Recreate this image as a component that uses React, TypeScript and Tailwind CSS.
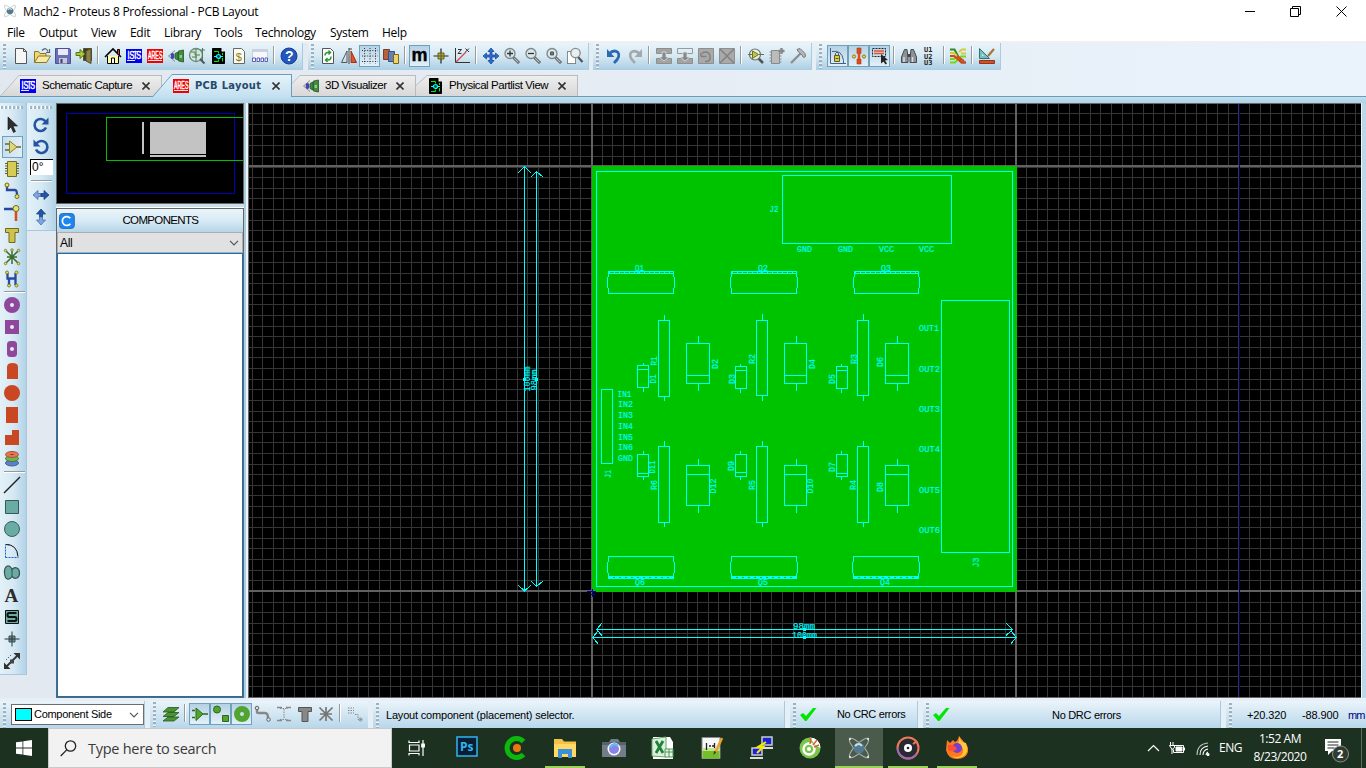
import React from "react";

type Kids = { children?: React.ReactNode };

/* ---------- icon helpers ---------- */
const Ic = ({ children, s = 18 }: Kids & { s?: number }) => (
  <svg width={s} height={s} viewBox="0 0 18 18" fill="none" className="shrink-0">{children}</svg>
);
const Logo = ({ text, color }: { text: string; color: string }) => (
  <svg width="16" height="14" viewBox="0 0 16 14" className="shrink-0">
    <rect width="16" height="14" fill={color} />
    <g transform={text === "ISIS" ? "translate(1.5 0) scale(.72 1)" : "translate(1 0) scale(.53 1)"}>
      <text x="0" y="10.500" fontSize="10" fill="#fff" stroke="#fff" strokeWidth=".5" fontFamily="Liberation Sans, sans-serif">{text}</text>
    </g>
    <path d={text === "ISIS" ? "M1 11.500h8M7 2.500h8" : "M1 11.500h14"} stroke="#fff" strokeWidth="1" opacity=".9" />
  </svg>
);
const Partlist = () => (
  <Ic><path d="M3.500 1.500h9l3 3v12h-12z" fill="#000" stroke="#000" /><path d="M12.500 1v3.500H16z" fill="#fff" /><path d="M5 4.500h4.500v2M5 14.500h4.500v-2M13.500 6v2M13.500 11v3.500" stroke="#0e0" /><path d="M5 9.500h9" stroke="#0ff" /><circle cx="9.500" cy="9.500" r="2" fill="#044" stroke="#0ff" strokeWidth="1.200" /></Ic>
);
const Viewer = () => (
  <Ic><path d="M8 3.500 1.500 9 8 14.500" stroke="#888" /><ellipse cx="5.500" cy="9" rx="1.800" ry="3" fill="#4342b8" /><path d="M8 6.500 11 5v8l-3-1.500zM11.500 4l5-1v12l-5-1z" fill="#3f8f3c" stroke="#24532a" strokeWidth=".8" /><path d="M12.500 8h2.500v3h-2.500z" fill="#8acb86" /></Ic>
);
const Mag = ({ children }: Kids) => (
  <Ic><path d="m10.500 10.500 5.500 5.500" stroke="#4a4a4a" strokeWidth="2.800" /><path d="m11 11 4.500 4.500" stroke="#bbb" strokeWidth="1.200" /><circle cx="7" cy="6.500" r="5" fill="#d8e8ea" stroke="#7c878a" strokeWidth="1.300" />{children}</Ic>
);
const Gray = ({ d }: { d: string }) => (
  <Ic><path d="M1.500 1.500h15v15h-15z" fill="#a9a9a9" stroke="#8f8f8f" /><path d={d} stroke="#7f8284" strokeWidth="1.500" /></Ic>
);

const fileIcons = {
  blank: <Ic><path d="M3.500 1.500h8l3 3v12h-11z" fill="#f6f6f6" stroke="#555" /><path d="M11.500 1.500v3h3" stroke="#555" /></Ic>,
  open: <Ic><path d="M1.500 15V4.500h4l1.500 2h6V9" fill="#ecd877" stroke="#8e7426" /><path d="m1.500 15.500 4-6.500h12l-4 6.500z" fill="#f8eaa0" stroke="#8e7426" /><path d="M9 3.500q4-4 6 1M16.500 2v3.500H13" stroke="#56606e" strokeWidth="1.200" /></Ic>,
  save: <Ic><path d="M1.500 1.500h14l1 1v14h-15z" fill="#6b6fb8" stroke="#4c5096" /><path d="M4 2h10v6H4z" fill="#e9eaf7" /><path d="M5 11h8v5.500H5z" fill="#c8c9d4" /><path d="M6.500 12h2v4h-2z" fill="#3a3d77" /></Ic>,
  exit: <Ic><path d="M8.500 1.500h8v12h-8z" fill="#3c3c2d" stroke="#57532c" /><path d="m11 4 5-2.500v15L11 14z" fill="#8d8247" stroke="#514b25" /><path d="M1 5.500h4V2.500L10 7l-5 4.500V8.500H1z" fill="#a9cb31" stroke="#587414" /></Ic>,
  home: <Ic><path d="M3.500 9v7.500h11V9" fill="#ffffa0" stroke="#000" /><path d="m1 10 8-8 8 8" stroke="#000" strokeWidth="1.600" /><path d="M13.500 6V2.500h2V8" fill="#e33" stroke="#000" /><path d="M7.500 16v-5h3v5" fill="#fff" stroke="#000" /></Ic>,
  gerber: <Ic><circle cx="8" cy="8" r="6.500" fill="#d5e6de" stroke="#6b8a7b" strokeWidth="1.300" /><path d="M3 5h4v3h5M8 2v12M4 10h5M14.500 1v14M12 3h5" stroke="#4b7e58" /><path d="m12 12 4.500 4.500" stroke="#555" strokeWidth="2" /></Ic>,
  bom: <Ic><path d="M3.500 1.500h8l3 3v12h-11z" fill="#fbfbef" stroke="#666" /><text x="5.800" y="13.500" fontSize="11" fill="#8a7a12" fontFamily="Liberation Sans, sans-serif">$</text></Ic>,
  notes: <Ic><path d="M1.500 2.500h15v12h-15z" fill="#f5f7fa" stroke="#c8ced8" /><path d="M1.500 2.500h15v2.500h-15z" fill="#c9d2de" /><path d="M1.500 11h3v3.500h-3zM6 11h2.500v3.500H6zM10 11h2.500v3.500H10zM14 11h2.500v3.500H14z" stroke="#5f60b4" strokeWidth="1" /></Ic>,
  help: <Ic><circle cx="9" cy="9" r="8" fill="#2257bd" stroke="#173f8f" /><text x="5" y="14" fontSize="14" fontWeight="bold" fill="#fff" fontFamily="Liberation Sans, sans-serif">?</text></Ic>,
};
const viewIcons = {
  refresh: <Ic><path d="M3.500 1.500h8l3 3v12h-11z" fill="#f8fbf7" stroke="#555" /><path d="M6 8.500q0-3 3-3h2M9.500 3.500l2 2-2 2M12 9.500q0 3.500-3 3.500H7M8.500 11l-2 2 2 2" stroke="#2f9237" strokeWidth="1.400" /></Ic>,
  flip: <Ic><path d="M7 4v11.500H1.500z" stroke="#555" /><path d="M11 4v11.500h5.500z" fill="#dc5530" stroke="#9b3017" /><path d="M9 1v16M9 2h3" stroke="#444" /></Ic>,
  grid: <Ic><path d="M1 3.500h16M1 9h16M1 14.500h16M3.500 1v16M9 1v16M14.500 1v16" stroke="#333" strokeDasharray="1 1.600" /></Ic>,
  layers: <Ic><path d="M1.500 2.500h6v10h-6z" fill="#b95f3a" stroke="#71402a" /><path d="M6.500 4.500h6v10h-6z" fill="#667fb5" stroke="#394f83" /><path d="M11.500 7.500h5v9h-5z" fill="#ecd468" stroke="#77671f" /></Ic>,
  m: <svg width="19" height="20" viewBox="0 0 19 20"><text x="1.500" y="15" fontSize="18" stroke="#000" strokeWidth=".4" fontWeight="bold" fontFamily="Liberation Sans, sans-serif">m</text></svg>,
  origin: <Ic><path d="M9 1.500v15M1.500 9h15" stroke="#222" strokeWidth="1.200" /><path d="M6 6h6v6H6z" fill="#b5ad28" stroke="#66610d" /><path d="M9 6v6M6 9h6" stroke="#555" /></Ic>,
  polar: <Ic><path d="M2.500 1v14.500H17" stroke="#333" /><path d="M3 15 13 5" stroke="#d44" strokeWidth="1.200" /><path d="M5 2.500h3.500L5 6.500h3.500M12.500 1.500l3.500 3.500m0-3.500-3.500 3.500" stroke="#333" /></Ic>,
  pan: <Ic><path d="m9 1 3 3.500h-2V8h3.500V6L17 9l-3.500 3v-2H10v3.500h2L9 17l-3-3.500h2V10H4.500v2L1 9l3.500-3v2H8V4.500H6z" fill="#2d6fd0" stroke="#19479b" strokeWidth=".8" /></Ic>,
  zin: <Mag><path d="M7 3.500v6M4 6.500h6" stroke="#333" strokeWidth="1.300" /></Mag>,
  zout: <Mag><path d="M4 6.500h6" stroke="#333" strokeWidth="1.300" /></Mag>,
  zfit: <Mag><path d="M5.500 5h3v3h-3z" fill="#777" stroke="#555" /></Mag>,
  zarea: <Ic><path d="M1.500 4.500h8v12h-8z" fill="#fff" stroke="#222" strokeDasharray="1 1" /><path d="m12 10 4.500 5" stroke="#555" strokeWidth="2.200" /><circle cx="9.500" cy="6" r="4.700" fill="#e7eff0" stroke="#858d8d" strokeWidth="1.300" /></Ic>,
};
const editIcons = {
  undo: <Ic><path d="M4 7Q9 2 13 5.500q3 4-4 10.500" stroke="#2a6ab5" strokeWidth="2.800" /><path d="M2 2v8h7.500z" fill="#2a6ab5" /></Ic>,
  redo: <Ic><path d="M14 7Q9 2 5 5.500q-3 4 4 10.500" stroke="#a3a8ab" strokeWidth="2.600" /><path d="M16 2v8H8.500z" fill="#a3a8ab" /></Ic>,
  g1: <Ic><path d="M1.500 1.500h15v5h-15zM1.500 11.500h15v5h-15z" fill="#a3a3a3" stroke="#8f8f8f" /><path d="M7 5h4v5h3l-5 4-5-4h3z" fill="#888" stroke="#dce6eb" strokeWidth=".8" /></Ic>,
  g2: <Ic><path d="M1.500 1.500h15v5h-15z" stroke="#999" /><path d="M1.500 11.500h15v5h-15z" fill="#a3a3a3" stroke="#8f8f8f" /><path d="M7 5h4v5h3l-5 4-5-4h3z" fill="#888" stroke="#dce6eb" strokeWidth=".8" /></Ic>,
  g3: <Gray d="M4 9.500h5.500M4 6v3.500M5 6q7-3 8 3t-5 5.500" />,
  g4: <Gray d="m2 2 14 14M16 2 2 16" />,
  pick: <Ic><path d="m11 11 5 5" stroke="#555" strokeWidth="2.600" /><circle cx="8" cy="7.500" r="5.500" fill="#e6eeda" stroke="#6b7370" strokeWidth="1.200" /><path d="M1 7.500h4M12 7.500h5M5.500 4v7.500L11.500 7.500z" stroke="#66733c" fill="#c3c43b" /></Ic>,
  pack: <Ic><path d="M3.500 3.500h8v13h-8z" fill="#bbb" stroke="#8a8a8a" /><path d="M1.500 5h2m-2 3h2m-2 3h2m-2 3h2M11.500 9h2m-2 3h2m-2 3h2" stroke="#888" /><path d="M13.500 1v6M10.500 4h6" stroke="#888" strokeWidth="2.400" /></Ic>,
  hammer: <Ic><path d="M2 16 11.500 6.500" stroke="#8d9091" strokeWidth="2.400" /><path d="m8 2.500 3-1 5 5 .5 3-2 1-2-3-3-2.500z" fill="#b5b7b8" stroke="#777" /></Ic>,
};
const toolIcons = {
  lock: <Ic><path d="M1.500 1v15.500H17M3 4.500q10-2 11.500 9v3" stroke="#42608c" /><path d="M5.500 8.500h5v6h-5z" fill="#d8ce3c" stroke="#625c17" /><path d="M6.500 8V6.500q1.500-3 3 0V8M6.500 11.500h3" stroke="#555" /></Ic>,
  track: <Ic><path d="M7 1h4v5.500H7zM7 12h4v5H7z" fill="#df4d1a" stroke="#a83714" strokeWidth=".6" /><path d="M9 6v6" stroke="#df4d1a" strokeWidth="2.500" /><circle cx="4" cy="9.500" r="1.600" fill="#ead743" stroke="#887d1b" /><circle cx="14" cy="9.500" r="1.600" fill="#ead743" stroke="#887d1b" /></Ic>,
  sel: <Ic><path d="M1.500 1.500h13v8h-13z" stroke="#222" strokeDasharray="2 1" /><path d="M3 4h10M3 6.500h10" stroke="#df5430" strokeWidth="1.600" /><path d="m10 7 7 6-3 .4 2 3-1.500 1-2-3-2.500 2z" fill="#222" /></Ic>,
  find: <Ic><path d="M4.500 2.500h2.500l1 7.500v5.500H1.500V10zM11 2.500h2.500l3 7.500v5.500H10V10z" fill="#8c9298" stroke="#484c50" /><path d="M7.500 7h3v3h-3z" fill="#444" /><path d="M4 10v5M12.500 10v5" stroke="#ddd" strokeWidth="1.500" /></Ic>,
  auto: <svg width="14" height="20" viewBox="0 0 14 20" fontSize="7" fontFamily="DejaVu Sans Mono, monospace" fontWeight="bold" fill="#222"><text x="1" y="6">U1</text><text x="1" y="12.500">U2</text><text x="1" y="19">U3</text></svg>,
  router: <Ic><path d="M1 2.500h4.500l7 13H17" stroke="#328a22" strokeWidth="2" /><path d="M1 6h4l3 3M10 5l3-2.500h4M12 6.500h5" stroke="#d8ca38" strokeWidth="2" /><path d="M17 9.500h-5l-3 3M1 12h4l2-2M1 15.500h5l3-3" stroke="#74d818" strokeWidth="2" /><path d="M1 9h4l7.500 6.500H17M8 9l7 5" stroke="#d8421a" strokeWidth="2" /></Ic>,
  rules: <Ic><path d="M1.500 1.500v10h10z" fill="#79bfc0" stroke="#327476" /><path d="M4 7v2h2z" fill="#d7ebf1" /><path d="m10 9 6-7" stroke="#a97430" strokeWidth="2.200" /><path d="M1.500 13.500h15v3h-15z" fill="#d44e28" stroke="#923519" /></Ic>,
};
const pcbIcons = {
  arrow: <Ic><path d="M5 1v13l3-3 2.500 5.500 2-1L10 10h4.500z" fill="#2e2e2e" stroke="#111" strokeWidth=".6" /></Ic>,
  comp: <Ic><path d="M1 6h4M1 12h4M13 9h4" stroke="#67682b" strokeWidth="1.300" /><path d="M5.500 3v12L13 9z" fill="#ded77a" stroke="#8b8228" /></Ic>,
  chip: <Ic><path d="M2 3.500h14M2 6h14M2 8.500h14M2 11h14M2 13.500h14" stroke="#625d22" /><path d="M4.500 1.500h9v15h-9z" fill="#d6cb55" stroke="#706a22" /></Ic>,
  trk: <Ic><path d="M4 3v5h8q2 0 2 5" stroke="#2949a0" strokeWidth="2.300" /><circle cx="4" cy="3" r="2" fill="#eee15a" stroke="#736b24" /><circle cx="14" cy="14.500" r="2" fill="#eee15a" stroke="#736b24" /></Ic>,
  via: <Ic><path d="M1 5h12" stroke="#2746a1" strokeWidth="2.500" /><path d="M13 5v12" stroke="#d74b1a" strokeWidth="2.500" /><circle cx="13" cy="4.500" r="3" fill="#ebe06a" stroke="#726b25" /></Ic>,
  zone: <Ic><path d="M2.500 2.500h13v4H12v10H6v-10H2.500z" fill="#cfc34b" stroke="#716b22" /></Ic>,
  rats: <Ic><path d="M9 2v14M3 3l12 12M15 3 3 15M4 9h10" stroke="#3d6d2d" strokeWidth="1.500" /><g fill="#e4da3d" stroke="#625e22" strokeWidth=".6"><circle cx="2.500" cy="2.500" r="1.300" /><circle cx="15.500" cy="2.500" r="1.300" /><circle cx="2.500" cy="15.500" r="1.300" /><circle cx="15.500" cy="15.500" r="1.300" /><circle cx="9" cy="2" r="1.300" /></g></Ic>,
  match: <Ic><path d="M4.500 3v5.500h8V3M12.500 8v7M6 8v7" stroke="#2949a0" strokeWidth="2.300" /><g fill="#e4da3d" stroke="#625e22" strokeWidth=".7"><circle cx="4" cy="2.500" r="1.500" /><circle cx="13.500" cy="2.500" r="1.500" /><circle cx="6" cy="15.500" r="1.500" /><circle cx="13.500" cy="15.500" r="1.500" /></g></Ic>,
};
const PURPLE = "#8f479b";
const ORANGE = "#c94722";
const padIcons = [
  <Ic><circle cx="9" cy="9" r="8" fill={PURPLE} /><circle cx="9" cy="9" r="2" fill="#e5ebf5" /></Ic>,
  <Ic><path d="M2 2h14v14H2z" fill={PURPLE} /><circle cx="9" cy="9" r="2" fill="#e5ebf5" /></Ic>,
  <Ic><rect x="4" y="1" width="10" height="16" rx="3.500" fill={PURPLE} /><circle cx="9" cy="9" r="2" fill="#e5ebf5" /></Ic>,
  <Ic><path d="M4 17V5q0-4 5.500-4T15 5v12z" fill={ORANGE} /></Ic>,
  <Ic><circle cx="9" cy="9" r="8" fill={ORANGE} /></Ic>,
  <Ic><path d="M3 1h12v16H3z" fill={ORANGE} /></Ic>,
  <Ic><path d="M2 7h7V2h7v15H2z" fill={ORANGE} /></Ic>,
  <Ic><ellipse cx="9" cy="13" rx="6.500" ry="3" fill="#5a7fd2" stroke="#53627f" /><ellipse cx="9" cy="8.500" rx="6.500" ry="3" fill="#6eb845" stroke="#4b7537" /><ellipse cx="9" cy="4.500" rx="6.500" ry="3" fill="#f2704c" stroke="#8f5b48" /><path d="M7.500 4.500h3" stroke="#643" /></Ic>,
];
const TEAL = "#6aaca4";
const drawIcons = [
  <Ic><path d="M1 17 17 1" stroke="#222" strokeWidth="1.400" /></Ic>,
  <Ic><path d="M2.500 2.500h13v13h-13z" fill={TEAL} stroke="#33595c" /></Ic>,
  <Ic><circle cx="9" cy="9" r="7.500" fill={TEAL} stroke="#3d5d5d" /></Ic>,
  <Ic><path d="M2.500 15.500v-13h4M2.500 15.500h13" stroke="#1663cc" strokeDasharray="2 1" /><path d="M3 2.500q11 0 12 12" stroke="#111" /></Ic>,
  <Ic><path d="M9 5.500C6-1 1 2 1.500 9S6 17 9 12.500C12 16 16.500 14 16.500 9S12 2 9 5.500z" fill={TEAL} stroke="#355252" strokeWidth="1.200" /><path d="M9 6v6" stroke="#355252" /></Ic>,
  <svg width="18" height="22" viewBox="0 -2 18 22"><text x="1.500" y="15.500" fontSize="19" fontWeight="bold" fill="#2b2b2b" fontFamily="Liberation Serif, serif">A</text></svg>,
  <Ic><path d="M2.500 2.500h13v13h-13z" fill={TEAL} stroke="#111" /><path d="M13.500 5H6Q4.500 5 4.500 7t1.500 2h6q1.500 0 1.500 2T12 13H4.500" stroke="#111" strokeWidth="2" /></Ic>,
  <Ic><path d="M9 1.500v15M1.500 9h15" stroke="#333" /><path d="M6 6h6v6H6z" fill="#62928d" stroke="#355" /><path d="M9 6v6M6 9h6" stroke="#333" /></Ic>,
  <Ic><path d="M2 16 16 2" stroke="#333" strokeWidth="1.800" /><path d="M1 10.500v6.500h6.500zM10.500 1H17v6.500z" fill="#333" /><path d="M7 7.500h4v4H7z" fill="#444" /><path d="m3 8 6-6" stroke="#333" strokeDasharray="1 2" /></Ic>,
];
const GREEN = "#52a431";
const Gn = { fill: GREEN, stroke: "#2c681b" };
const filterIcons = [
  <Ic><path d="M1 5.500h3M1 12.500h3M12 9h5" stroke="#2c681b" strokeWidth="1.300" /><path d="M5 3v12.500L12 9z" {...Gn} /></Ic>,
  <Ic><circle cx="5" cy="4.500" r="3.500" {...Gn} /><path d="M10.500 10.500h6v6h-6z" {...Gn} /></Ic>,
  <Ic><circle cx="9" cy="9" r="5" stroke={GREEN} strokeWidth="6" /></Ic>,
];
const GY = "#85888b";
const filterOff = [
  <Ic><path d="M3 3v4q0 1 2 1h6q3 0 3 5" stroke={GY} strokeWidth="2.400" /><circle cx="3" cy="3" r="1.800" fill="#ddd" stroke="#666" /><circle cx="14.500" cy="14.500" r="1.800" fill="#ddd" stroke="#666" /></Ic>,
  <Ic><path d="M2 2.500h5M11 2.500h5M2 15.500h5M11 15.500h5" stroke="#888" strokeWidth="1.400" /><path d="M5 3.500h8M5 14.500h8M9 4v10" stroke="#888" strokeDasharray="1.500 1" /></Ic>,
  <Ic><path d="M2.500 2.500h13v4H12v10H6v-10H2.500z" fill="#888" stroke="#555" /></Ic>,
  <Ic><path d="M9 2v14M2.500 2.500l13 13M15.500 2.500l-13 13M3 9h12" stroke="#777" strokeWidth="1.700" /></Ic>,
];

/* ---------- toolbar parts ---------- */
const Cell = ({ children, on }: Kids & { on?: boolean }) =>
  on ? (
    <div className="flex h-[22px] w-[21px] shrink-0 items-center justify-center border border-[#6fa1bf] bg-gradient-to-b from-[#b5d2e5] to-[#e3f0f8]">{children}</div>
  ) : (
    <div className="flex h-[22px] w-[21px] shrink-0 items-center justify-center">{children}</div>
  );
const Sep = ({ wide }: { wide?: boolean }) => (
  <div className={wide ? "flex h-[20px] w-[8px] shrink-0 justify-center" : "flex h-[20px] w-[7px] shrink-0 justify-center"}>
    <div className="h-[18px] w-[2px] border-r border-white bg-[#9a9a9a]" />
  </div>
);
const Grip = () => (
  <div className="ml-[3px] h-[26px] w-[3px] shrink-0 bg-[repeating-linear-gradient(to_bottom,#eef5fa_0,#eef5fa_1px,#9fb0bd_1px,#9fb0bd_3px,transparent_3px,transparent_4px)]" />
);
const HGrip = () => (
  <div className="mt-[3px] h-[3px] w-[24px] shrink-0 bg-[repeating-linear-gradient(to_right,#fff_0,#fff_1px,#a3b5c1_1px,#a3b5c1_3px,transparent_3px,transparent_4px)]" />
);

const TopBars = () => (
  <div className="flex h-[31px] bg-gradient-to-r from-[#e1e8ef] to-[#eaf2fb]">
    <div className="flex h-[27px] w-[303px] shrink-0 items-center border-r border-[#a9cbe0] bg-gradient-to-b from-[#e9f4fa] via-[#d5e8f3] to-[#abcee3] pb-px">
      <Grip /><div className="w-[4px]" />
      <Cell>{fileIcons.blank}</Cell><Cell>{fileIcons.open}</Cell><Cell>{fileIcons.save}</Cell><Cell>{fileIcons.exit}</Cell>
      <Sep wide />
      <Cell>{fileIcons.home}</Cell><Cell><Logo text="ISIS" color="#0000f0" /></Cell><Cell><Logo text="ARES" color="#f00000" /></Cell><Cell><Viewer /></Cell><Cell>{fileIcons.gerber}</Cell><Cell><Partlist /></Cell><Cell>{fileIcons.bom}</Cell><Cell>{fileIcons.notes}</Cell>
      <Sep wide />
      <Cell>{fileIcons.help}</Cell>
    </div>
    <div className="ml-[5px] flex h-[27px] w-[281px] shrink-0 items-center border-r border-[#a9cbe0] bg-gradient-to-b from-[#e9f4fa] via-[#d5e8f3] to-[#abcee3] pb-px">
      <Grip /><div className="w-[3px]" />
      <Cell>{viewIcons.refresh}</Cell><Cell>{viewIcons.flip}</Cell><Cell on>{viewIcons.grid}</Cell><Cell>{viewIcons.layers}</Cell>
      <Sep wide />
      <Cell on>{viewIcons.m}</Cell><Cell>{viewIcons.origin}</Cell><Cell>{viewIcons.polar}</Cell>
      <Sep wide />
      <Cell>{viewIcons.pan}</Cell><Cell>{viewIcons.zin}</Cell><Cell>{viewIcons.zout}</Cell><Cell>{viewIcons.zfit}</Cell><Cell>{viewIcons.zarea}</Cell>
    </div>
    <div className="ml-[4px] flex h-[27px] w-[219px] shrink-0 items-center border-r border-[#a9cbe0] bg-gradient-to-b from-[#e9f4fa] via-[#d5e8f3] to-[#abcee3] pb-px">
      <Grip /><div className="w-[4px]" />
      <Cell>{editIcons.undo}</Cell><Cell>{editIcons.redo}</Cell>
      <Sep wide />
      <Cell>{editIcons.g1}</Cell><Cell>{editIcons.g2}</Cell><Cell>{editIcons.g3}</Cell><Cell>{editIcons.g4}</Cell>
      <Sep wide />
      <Cell>{editIcons.pick}</Cell><Cell>{editIcons.pack}</Cell><Cell>{editIcons.hammer}</Cell>
    </div>
    <div className="ml-[4px] flex h-[27px] w-[185px] shrink-0 items-center border-r border-[#a9cbe0] bg-gradient-to-b from-[#e9f4fa] via-[#d5e8f3] to-[#abcee3] pb-px">
      <Grip /><div className="w-[5px]" />
      <Cell on>{toolIcons.lock}</Cell><Cell on>{toolIcons.track}</Cell><Cell on>{toolIcons.sel}</Cell>
      <Sep wide />
      <Cell>{toolIcons.find}</Cell><Cell>{toolIcons.auto}</Cell>
      <Sep />
      <Cell>{toolIcons.router}</Cell>
      <Sep wide />
      <Cell>{toolIcons.rules}</Cell>
    </div>
  </div>
);

/* ---------- tabs ---------- */
const X = () => (
  <svg width="8" height="8" viewBox="0 0 8 8" className="shrink-0"><path d="m.5.5 7 7M7.500.5l-7 7" stroke="#333" strokeWidth="1.600" /></svg>
);
const Tabs = () => (
  <div className="flex h-[23px] items-end border-b border-[#6b9cbc] bg-gradient-to-r from-[#e1e8ef] to-[#eaf2fb] font-['Liberation_Sans',sans-serif] text-[11.5px] text-black">
    <div className="h-[21px] w-[162px] shrink-0 bg-[#b8bcc0] pt-px pr-px [clip-path:polygon(19px_0,100%_0,100%_100%,0_100%)]">
      <div className="flex h-[20px] items-center bg-gradient-to-b from-[#eeeeee] to-[#d8d8d8] pb-px pl-[20px] [clip-path:polygon(19px_0,100%_0,100%_100%,1px_100%)]">
        <Logo text="ISIS" color="#0000f0" /><span className="ml-[6px] w-[100px] whitespace-nowrap tracking-[-0.45px]">Schematic Capture</span><X />
      </div>
    </div>
    <div className="z-10 -mb-px ml-[-10px] h-[23px] w-[140px] shrink-0 bg-[#6b9cbc] pt-px pr-px [clip-path:polygon(20px_0,100%_0,100%_100%,0_100%)]">
      <div className="flex h-[22px] items-center bg-gradient-to-b from-[#e6f3fa] to-[#c3e0f0] pb-px pl-[21px] [clip-path:polygon(20px_0,100%_0,100%_100%,1px_100%)]">
        <Logo text="ARES" color="#f00000" /><span className="ml-[6px] w-[77px] whitespace-nowrap pt-px font-['DejaVu_Sans_Condensed','DejaVu_Sans',sans-serif] text-[11px] font-bold tracking-[0.3px] text-[#25496a]">PCB Layout</span><X />
      </div>
    </div>
    <div className="h-[21px] w-[124px] shrink-0 bg-[#b8bcc0] pt-px pr-px [clip-path:polygon(8px_0,100%_0,100%_100%,0_100%,0_8px)]">
      <div className="flex h-[20px] items-center bg-gradient-to-b from-[#eeeeee] to-[#d8d8d8] pb-px pl-[10px] [clip-path:polygon(8px_0,100%_0,100%_100%,0_100%,0_8px)]">
        <Viewer /><span className="ml-[5px] w-[71px] whitespace-nowrap tracking-[-0.45px]">3D Visualizer</span><X />
      </div>
    </div>
    <div className="h-[21px] w-[162px] shrink-0 bg-[#b8bcc0] pt-px pr-px [clip-path:polygon(11px_0,100%_0,100%_100%,0_100%,0_10px)]">
      <div className="flex h-[20px] items-center bg-gradient-to-b from-[#eeeeee] to-[#d8d8d8] pb-px pl-[10px] [clip-path:polygon(11px_0,100%_0,100%_100%,0_100%,0_10px)]">
        <Partlist /><span className="ml-[5px] w-[109px] whitespace-nowrap tracking-[-0.45px]">Physical Partlist View</span><X />
      </div>
    </div>
  </div>
);

/* ---------- left side ---------- */
const VCell = ({ children, on }: Kids & { on?: boolean }) => (
  <div className={on ? "ml-[2px] flex h-[22px] w-[21px] items-center justify-center border border-[#6fa1bf] bg-gradient-to-r from-[#c8dfee] to-[#e0eef7]" : "ml-[1px] flex h-[22px] w-[22px] items-center justify-center"}>{children}</div>
);
const HSep = () => <div className="ml-[4px] h-[4px] w-[21px] pt-px"><div className="h-[2px] border-b border-white bg-[#999]" /></div>;
const LeftTools = () => (
  <div className="flex w-[56px] shrink-0 items-start bg-[#e2e9f0]">
    <div className="flex h-[572px] w-[27px] flex-col border-b border-r border-[#a8c9dd] bg-gradient-to-r from-[#e4f1f8] via-[#d6e9f4] to-[#b2d3e7]">
      <HGrip /><div className="h-[5px]" />
      {Object.entries(pcbIcons).map(([k, v]) => <VCell key={k} on={k === "comp"}>{v}</VCell>)}
      <HSep />
      {padIcons.map((v, i) => <VCell key={i}>{v}</VCell>)}
      <HSep />
      {drawIcons.map((v, i) => <VCell key={i}>{v}</VCell>)}
    </div>
    <div className="flex h-[128px] w-[29px] flex-col items-center border-b border-[#a8c9dd] bg-gradient-to-r from-[#e4f1f8] via-[#d6e9f4] to-[#b2d3e7] pr-px">
      <HGrip /><div className="h-[5px]" />
      <div className="flex h-[22px] items-center"><Ic><path d="M14 11.500a6 6 0 1 1-.5-6" stroke="#24549f" strokeWidth="2.600" /><path d="M16.500 1.500v7h-7z" fill="#24549f" /></Ic></div>
      <div className="flex h-[22px] items-center"><Ic><path d="M4 11.500a6 6 0 1 0 .5-6" stroke="#24549f" strokeWidth="2.600" /><path d="M1.500 1.500v7h7z" fill="#24549f" /></Ic></div>
      <div className="ml-px mt-px h-[16px] w-[23px] border-l border-t border-black bg-white pl-px font-['Liberation_Sans',sans-serif] text-[12px] leading-[14px]">0°</div>
      <div className="mt-[5px] h-[2px] w-[21px] border-b border-white bg-[#999]" />
      <div className="mt-[2px] flex h-[22px] items-center"><Ic><path d="m1 9 5-4.500V7.500h3v3H6v3z" fill="#7fa4df" stroke="#4c72b5" strokeWidth=".8" /><path d="m17 9-5-4.500V7.500H9v3h3v3z" fill="#2455a5" stroke="#1a4188" strokeWidth=".8" /></Ic></div>
      <div className="flex h-[22px] items-center"><Ic><path d="m9 1 4.500 5H10.500v3h-3V6h-3z" fill="#2455a5" stroke="#1a4188" strokeWidth=".8" /><path d="m9 17 4.500-5H10.500V9h-3v3h-3z" fill="#7fa4df" stroke="#4c72b5" strokeWidth=".8" /></Ic></div>
    </div>
  </div>
);
const Chev = () => <svg width="10" height="6" viewBox="0 0 10 6" className="shrink-0"><path d="m1 .8 4 4 4-4" fill="none" stroke="#555" strokeWidth="1.200" /></svg>;
const SidePanel = () => (
  <div className="flex w-[188px] shrink-0 flex-col">
    <div className="h-[101px] border border-[#666] bg-black">
      <svg width="186" height="99" viewBox="57 104 186 99" shapeRendering="crispEdges" fill="none">
        <path d="M66.500 113.500h168v80h-168z" stroke="#0000b8" />
        <path d="M150 122h56v32h-56zM150 155h56v2h-56zM142 122h2v32h-2z" fill="#c3c3c3" />
        <path d="M106.500 117.500h140v43h-140z" stroke="#00c000" />
      </svg>
    </div>
    <div className="h-[4px] border-b border-white bg-[#c9deeb]" />
    <div className="flex min-h-0 flex-1 flex-col border border-[#666]">
      <div className="flex h-[23px] shrink-0 items-center bg-gradient-to-b from-[#e9f5fb] via-[#d8eaf4] to-[#b4d6e9] pl-[2px] font-['Liberation_Sans',sans-serif] text-[11.5px]">
        <svg width="16" height="16" viewBox="0 0 16 16"><rect x=".5" y=".5" width="15" height="15" rx="3" fill="#1e86f2" stroke="#2a6cab" /><path d="M11.500 5.300a4.500 4.500 0 1 0 0 5.400" fill="none" stroke="#fff" strokeWidth="1.700" /></svg>
        <span className="w-[170px] pl-[3px] text-center tracking-[-0.65px]">COMPONENTS</span>
      </div>
      <div className="flex h-[21px] shrink-0 items-center justify-between border border-[#adadad] bg-[#e1e1e1] pl-[2px] pr-[3px] font-['Liberation_Sans',sans-serif] text-[12px] tracking-[-0.3px]">All<Chev /></div>
      <div className="flex-1 border border-[#1073c0] bg-white" />
    </div>
  </div>
);

/* ---------- PCB drawing ---------- */
const gx = Array.from({ length: 105 }, (_, i) => Math.floor(591.6 + (i - 32) * 10.61));
const gy = Array.from({ length: 57 }, (_, i) => Math.round(166.5 + (i - 6) * 10.61));
type L = [string, number, number, number];
const T = ({ t, x, y, w, r = 0 }: { t: string; x: number; y: number; w: number; r?: number }) => (
  <text x={x - w / 2} y={y + 2.6} textLength={w} lengthAdjust="spacingAndGlyphs" transform={r ? `rotate(${r} ${x} ${y})` : undefined}>{t}</text>
);
const rotated: L[] = [
  ["R1", 654.5, 361, 9], ["D1", 653, 379, 9], ["D2", 715.5, 364, 10], ["D3", 732, 379, 10], ["R2", 752.5, 359, 10], ["D4", 812.5, 364, 10], ["D5", 832.5, 379, 10], ["R3", 854.5, 359, 10], ["D6", 880.5, 362, 10],
  ["D11", 652.5, 467, 13], ["R6", 654.5, 485, 10], ["D12", 713.5, 486, 15], ["D9", 731.5, 466, 10], ["R5", 752.5, 485, 10], ["D10", 810.5, 486, 15], ["D7", 832.5, 467, 10], ["R4", 853.5, 485, 10], ["D8", 880.5, 487, 10],
  ["J1", 608, 474, 8], ["J3", 976, 562.5, 10], ["100mm", 527.5, 379, 25], ["98mm", 534, 380, 21],
];
const flat: L[] = [
  ["GND", 804.5, 249, 15], ["GND", 845.5, 249, 15], ["VCC", 886.5, 249, 15], ["VCC", 926.5, 249, 15], ["J2", 774, 209, 9],
  ["Q1", 639.5, 268.5, 9], ["Q2", 763, 268.5, 10], ["Q3", 886, 268.5, 10], ["Q6", 640, 582.5, 10], ["Q5", 763, 582.5, 10], ["Q4", 885, 582.5, 10],
  ["IN1", 624.5, 394.5, 14], ["IN2", 625.5, 404.5, 15], ["IN3", 625.5, 415.5, 15], ["IN4", 625.5, 426.5, 15], ["IN5", 625.5, 437.5, 15], ["IN6", 625.5, 447.5, 15], ["GND", 625.5, 458.5, 15],
  ["OUT1", 929, 328, 20], ["OUT2", 929.5, 369, 21], ["OUT3", 929.5, 409, 21], ["OUT4", 929.5, 449, 21], ["OUT5", 929.5, 490, 21], ["OUT6", 929.5, 530, 21],
  ["98mm", 804, 626, 22], ["100mm", 804.5, 635, 25],
];
const qTop = [[608.5, 65], [731.5, 65], [854.5, 64]];
const qBot = [[608.5, 65], [731.5, 65], [853.5, 65]];
const Board = () => (
  <div className="w-[1113px] shrink-0 border-l border-t border-b border-[#666] bg-black">
    <svg width="1112" height="593" viewBox="249 104 1112 593" fill="none" className="block">
      <g shapeRendering="crispEdges">
        {gx.map((x) => <path key={x} d={`M${x + 0.5} 104v593`} stroke="#363636" />)}
        {gy.map((y) => <path key={y} d={`M249 ${y + 0.5}h1113`} stroke="#363636" />)}
        <path d="M592 104v593M1016 104v593M249 166h1113M249 591h1113" stroke="#626062" strokeWidth="2" />
        <path d="M1239.500 104v593" stroke="#00006e" />
        <path d="M592 165.500h425v426H592z" fill="#00c300" />
        <path d="M587 591.500h9M592.500 589v8M590 594.500h5" stroke="#0000a0" />
      </g>
      <g stroke="#00ffff" shapeRendering="crispEdges">
        <path d="M596.500 171.500h416v415h-416zM782.500 175.500h169v68h-169zM941.500 300.500h68v252h-68zM601.500 389.500h11v74h-11z" />
        {qTop.map(([x, w]) => (
          <g key={x}>
            <path d={`M${x} 277v-5.500h${w}v5.500M${x} 288v5.500h${w}v-5.500M${x - 1} 277v11M${x + w + 1} 277v11M${x} 273.500h${w}`} />
            <path d={`M${x} 272.500h${w}`} strokeDasharray="1 4" />
          </g>
        ))}
        {qBot.map(([x, w]) => (
          <g key={x}>
            <path d={`M${x} 562v-5.500h${w}v5.500M${x} 573v5.500h${w}v-5.500M${x - 1} 562v11M${x + w + 1} 562v11M${x} 576.500h${w}`} />
            <path d={`M${x} 577.500h${w}`} strokeDasharray="4 2" />
          </g>
        ))}
        {[658.5, 756.5, 857.5].map((x, i) => (
          <path key={x} d={`M${x} 320.500h11v${i ? 75 : 76}h-11zM${x + 6} ${i ? 314 : 315}v6M${x + 6} 396v5M${x} 446.500h11v76h-11zM${x + 6} 441v5M${x + 6} 522v5`} />
        ))}
        {[[686.5, 23, 698.5], [784.5, 22, 796.5], [885.5, 23, 897.5]].map(([x, w, c]) => (
          <path key={x} d={`M${x} 343.500h${w}v40h-${w}zM${x} 375.500h${w}M${c} 336v7M${c} 384v7M${x} 465.500h${w}v40h-${w}zM${x} 474.500h${w}M${c} 459v6M${c} 506v7`} />
        ))}
        {[[637.5, 365.5, 473.5, 643.5], [735.5, 366.5, 472.5, 740.5], [836.5, 366.5, 473.5, 841.5]].map(([x, y, b, c]) => (
          <path key={x} d={`M${x} ${y}h11v22h-11zM${x} ${y + 4}h11M${c} ${y - 3}v3M${c} ${y + 22}v4M${x} 454.500h11v22h-11zM${x} ${b}h11M${c} 451v3M${c} 477v3`} />
        ))}
        <path d="M524.500 166v425M536.500 171v415M597 629.500h415M592 637.500h425" />
        <path d="M518 173l6.500-6.500 6.500 6.500M531 177l5.500-5.500 6.500 5.500M518 585l6.500 6 6.500-6M531 581l5.500 5.500 6.500-5.500M602 623l-5.500 6.500 5.500 6M598 631l-5.500 6.500 5.500 6M1006 623l6.500 6.500-6.500 6M1011 631l5.500 6.500-5.500 6" />
      </g>
      <path d="M523 378h3v3h-3zM535 378h3v3h-3zM803 628h3v3h-3zM803 636h3v3h-3z" fill="#0ff" />
      <g fill="#00ffff" stroke="#00ffff" strokeWidth=".15" fontSize="8.500" fontFamily="Liberation Mono, monospace">
        {flat.map(([t, x, y, w], i) => <T key={i} t={t} x={x} y={y} w={w} />)}
        {rotated.map(([t, x, y, w], i) => <T key={i} t={t} x={x} y={y} w={w} r={-90} />)}
      </g>
    </svg>
  </div>
);

/* ---------- status bar ---------- */
const Check = () => <svg width="17" height="15" viewBox="0 0 17 15" className="-mt-px shrink-0"><path d="M0 8l3-2 3 3 7-8h3.500L6.500 14H5z" fill="#00e600" /></svg>;
const StatusBar = () => (
  <div className="flex h-[30px] bg-[#e7eff6] pt-[3px] font-['Liberation_Sans',sans-serif] text-[11px] text-black">
    <div className="flex h-[27px] w-[145px] shrink-0 items-center border-r border-[#a9cbe0] bg-gradient-to-b from-[#eaf4fa] to-[#b8d7eb]">
      <Grip />
      <div className="ml-[5px] flex h-[21px] w-[133px] items-center border border-[#6d6d6d] bg-white pl-[3px] pr-[4px]">
        <div className="h-[13px] w-[17px] border border-black bg-[#00ffff]" />
        <span className="ml-[2px] flex-1 whitespace-nowrap tracking-[-0.3px]">Component Side</span><Chev />
      </div>
    </div>
    <div className="ml-[5px] flex h-[27px] w-[218px] shrink-0 items-center bg-gradient-to-b from-[#eaf4fa] to-[#b8d7eb] pb-px">
      <Grip /><div className="w-[4px]" />
      <Cell><Ic><g stroke="#27591a" strokeWidth=".8" fill="#4c9335"><path d="m1 16 5-4h11l-5 4zM1 11.500l5-4h11l-5 4zM1 7l5-4.500h11L12 7z" /></g></Ic></Cell>
      <Sep wide />
      {filterIcons.map((v, i) => <Cell key={i} on>{v}</Cell>)}
      {filterOff.map((v, i) => <Cell key={i}>{v}</Cell>)}
      <Sep wide />
      <Cell><Ic><path d="M2 3h6M2 5.500h6M2 8h6M9 9.500h3v5h4" stroke="#888" strokeDasharray="1.500 1" /><circle cx="14.500" cy="14.500" r="1.500" stroke="#888" /></Ic></Cell>
    </div>
    <div className="ml-[5px] flex h-[27px] w-[412px] shrink-0 items-center border-r border-[#a9cbe0] bg-gradient-to-b from-[#eaf4fa] to-[#b8d7eb]">
      <Grip /><span className="ml-[7px] mt-px tracking-[-0.19px]">Layout component (placement) selector.</span>
    </div>
    <div className="ml-[5px] flex h-[27px] w-[128px] shrink-0 items-center border-r border-[#a9cbe0] bg-gradient-to-b from-[#eaf4fa] to-[#b8d7eb]">
      <Grip /><div className="ml-[4px]"><Check /></div><span className="-mt-px ml-[20px] whitespace-nowrap tracking-[-0.33px]">No CRC errors</span>
    </div>
    <div className="ml-[5px] flex h-[27px] w-[298px] shrink-0 items-center border-r border-[#a9cbe0] bg-gradient-to-b from-[#eaf4fa] to-[#b8d7eb]">
      <Grip /><div className="ml-[4px]"><Check /></div><span className="ml-[102px] mt-px whitespace-nowrap tracking-[-0.3px]">No DRC errors</span>
    </div>
    <div className="ml-[5px] flex h-[27px] flex-1 items-center bg-gradient-to-b from-[#eaf4fa] to-[#b8d7eb]">
      <Grip /><span className="ml-[15px] mt-px w-[55px] tracking-[-0.1px]">+20.320</span><span className="mt-px w-[46px] tracking-[-0.1px]">-88.900</span><span className="mt-px text-[#000080] tracking-[-1px]">mm</span>
    </div>
  </div>
);

/* ---------- taskbar ---------- */
const App48 = ({ children, line, active }: Kids & { line?: boolean; active?: boolean }) => (
  <div className={active ? "ml-px flex h-[40px] w-[48px] shrink-0 flex-col items-center bg-[#4a5b4c]" : "flex h-[40px] w-[49px] shrink-0 flex-col items-center"}>
    <div className="flex h-[38px] items-center pt-[2px]">{children}</div>
    {(line || active) && <div className={active ? "h-[2px] w-[48px] bg-[#9bd158]" : "h-[2px] w-[40px] bg-[#9bd158]"} />}
  </div>
);
const S = ({ children }: Kids) => <svg width="24" height="24" viewBox="0 0 24 24" fill="none">{children}</svg>;
const Atom = ({ s }: { s: number }) => (
  <svg width={s} height={s} viewBox="0 0 24 24" fill="none">
    <g stroke="#a8b0ae"><ellipse cx="12" cy="12" rx="13" ry="4" transform="rotate(45 12 12)" /><ellipse cx="12" cy="12" rx="13" ry="4" transform="rotate(-45 12 12)" /></g>
    <circle cx="12" cy="12" r="5.500" fill="#55798f" /><path d="M8 10q4-4 7 0" stroke="#c7dfe9" strokeWidth="2" />
    <g fill="#ddd"><circle cx="3" cy="3" r="1.200" /><circle cx="21" cy="3" r="1.200" /><circle cx="3" cy="21" r="1.200" /><circle cx="21" cy="21" r="1.200" /></g>
  </svg>
);
const Taskbar = () => (
  <div className="flex h-[40px] bg-[#1c3120] font-['Open_Sans','Noto_Sans',sans-serif] text-white">
    <div className="flex w-[48px] items-center justify-center">
      <svg width="16" height="16" viewBox="0 0 16 16" fill="#fff"><path d="M0 2.300 6.500 1.400v6.200H0zM7.300 1.300 16 0v7.600H7.300zM0 8.400h6.500v6.200L0 13.700zM7.300 8.400H16V16l-8.700-1.300z" /></svg>
    </div>
    <div className="flex w-[344px] items-center border border-[#c8cac8] bg-[#f2f2f2] pl-[11px] text-[#3b3b3b]">
      <svg width="17" height="17" viewBox="0 0 17 17" fill="none" stroke="#222" strokeWidth="1.300"><circle cx="10.500" cy="6" r="5.200" /><path d="M6.700 9.900.7 16" /></svg>
      <span className="ml-[11px] mt-px text-[14.500px] tracking-[-0.27px]">Type here to search</span>
    </div>
    <div className="flex w-[1px]" />
    <App48><svg width="18" height="16" viewBox="0 0 18 16" fill="none" stroke="#fff" strokeWidth="1.200" className="mr-[2px]"><path d="M1 .5v2h10v-2M1 15.500v-2h10v2M1.500 5h9.500v6H1.500zM15 0v16" /><path d="M13.800 4h2.500v3h-2.500z" fill="#fff" /></svg></App48>
    <App48><svg width="22" height="21" viewBox="0 0 22 21" className="-mt-[3px] ml-px"><rect x="1" y="1" width="20" height="19" fill="#071e33" stroke="#31b5f2" strokeWidth="1.500" /><text x="4" y="15" fontSize="12" fontWeight="bold" fill="#31b5f2" fontFamily="Open Sans, sans-serif">Ps</text></svg></App48>
    <App48><S><path d="M19.500 5.500a9.500 9.500 0 1 0 0 13" stroke="#0bb80b" strokeWidth="5" /><circle cx="13" cy="12" r="4" fill="#e87710" /></S></App48>
    <App48 line><S><path d="M1 3h8l2 2.500h12V21H1z" fill="#f5c247" /><path d="M1 8h22v13H1z" fill="#ffd866" /><path d="M5 13h14v9h-4v-4H9v4H5z" fill="#3b91d8" /></S></App48>
    <App48><S><path d="M0 6h7l2-3h7l2 3h6v15H0z" fill="#737d89" /><path d="M0 6h24v3H0z" fill="#58616c" /><circle cx="12" cy="13" r="6.500" fill="#fff" /><circle cx="12" cy="13" r="5" fill="#8c83e8" /><path d="M8 11q4-5 8-1" stroke="#63b9f4" strokeWidth="2.500" /></S></App48>
    <App48><S><path d="M2 1h17l3 5v17H2z" fill="#fff" /><path d="M1 3 15 1v20L1 20z" fill="#dceedc" stroke="#69a56c" /><path d="m5 5 7 12M12 5 5 17" stroke="#218139" strokeWidth="2.800" /><path d="M14 13h8v8h-8zM14 16h8M18 13v8" stroke="#4c9a57" fill="#e5f3e4" /></S></App48>
    <App48><S><path d="M2 1.500h18v21H2z" fill="#f7f7f7" stroke="#8b8b8b" /><path d="M2.500 15h17v7.500h-17z" fill="#74be2a" /><path d="M2.500 12h17v3h-17z" fill="#bfe58f" /><path d="M6.500 7v7M9 10h2m1 0h2M14.500 7v5" stroke="#222" strokeWidth="1.300" /><path d="m22 2-7 15" stroke="#e7a32b" strokeWidth="2.600" /><path d="m14 15-.5 4 3-3" fill="#493312" /></S></App48>
    <App48><S><path d="M13 1h10v8H13zM3 12h10v7H3z" fill="#1922d4" stroke="#ccc" strokeWidth="1.500" /><path d="M12 11h12v2H12zM1 21h13v2H1z" fill="#ddd" /><path d="m17 6-8 5h5l-6 6" stroke="#f2e900" strokeWidth="2" /></S></App48>
    <App48><S><circle cx="12" cy="12" r="10.500" fill="#79c64a" /><path d="M12 1.500A10.500 10.500 0 0 1 22.500 12L17 9z" fill="#fff" /><circle cx="11" cy="13" r="5.500" stroke="#fff" strokeWidth="2.400" /><circle cx="11" cy="13" r="2" fill="#fff" /><path d="m12 8 1-6M15 9l4-5M16 11l5-2" stroke="#e45743" strokeWidth="1.500" /></S></App48>
    <App48 active><Atom s={24} /></App48>
    <App48 line><S><circle cx="12" cy="12" r="10.500" fill="#282a33" stroke="#f07858" strokeWidth="2" /><path d="M1.500 12a10.500 10.500 0 0 0 19 6" stroke="#9667c2" strokeWidth="2" /><circle cx="12" cy="12" r="4" fill="#fff" /><circle cx="12" cy="12" r="1.300" fill="#222" /><path d="m17 8 4-3" stroke="#f07858" strokeWidth="2" /></S></App48>
    <App48 line><S><path d="M2 4l3 3 3-3 2 2q3-1 4-6l5 6q5 4 4 10-2 7-11 7T1 14z" fill="#ff7a1c" /><path d="M14 0q2 7 7 7 3 8-1 12-7 6-13 1 9 3 11-4 1-6-6-8 3-2 2-8z" fill="#ffc73b" /><circle cx="12" cy="12" r="5" fill="#7540cf" /><path d="M3 9q6-1 9 4-4 4-9 1z" fill="#ff4e38" /></S></App48>
    <div className="flex flex-1 items-center justify-end">
      <svg width="13" height="8" viewBox="0 0 13 8" fill="none" stroke="#fff" strokeWidth="1.200"><path d="m1 7 5.500-5.500L12 7" /></svg>
      <svg width="17" height="13" viewBox="0 0 17 13" fill="none" stroke="#fff" className="ml-[9px] mr-px"><path d="M4.500 3.500h10v7h-10v-3M15.500 5.500v3" /><path d="M7 5h6v4H7z" fill="#fff" /><path d="M1.500 0v3M4 0v3M.5 3.500h5v2L3 7.500zM3 7v5" /></svg>
      <svg width="14" height="14" viewBox="0 0 14 14" fill="none" stroke="#fff" strokeWidth="1.100" className="ml-[9px] mr-px mt-[2px]"><path d="M1 13Q1 2 12 1" opacity=".7" /><path d="M4 13q0-8 8-9M7 13q0-5 5-6M10 13q0-2 2-3" /><circle cx="12" cy="12.500" r="1" fill="#fff" /></svg>
      <span className="ml-[8px] w-[24px] text-[12px] tracking-[-0.5px]">ENG</span>
      <div className="ml-[9px] flex w-[56px] flex-col items-center text-[12px] leading-[18px] tracking-[-0.45px]"><span className="whitespace-nowrap">1:52 AM</span><span className="whitespace-nowrap">8/23/2020</span></div>
      <svg width="25" height="25" viewBox="0 0 25 25" className="ml-[16px] mt-[4px]"><path d="M1 1h16v12H8l-4 4v-4H1z" fill="#fff" /><path d="M3.500 4h11M3.500 7h11M3.500 10h7" stroke="#1c3120" /><circle cx="16.500" cy="16" r="8" fill="#303a31" stroke="#89918a" /><text x="13" y="20" fontSize="11" fontWeight="bold" fill="#fff" fontFamily="Open Sans, sans-serif">2</text></svg>
      <div className="ml-[12px] mr-[4px] h-[40px] w-px bg-[#5d6d5f]" />
    </div>
  </div>
);

const menu: [string, string][] = [["File", "w-[32px]"], ["Output", "w-[52px]"], ["View", "w-[39px]"], ["Edit", "w-[34px]"], ["Library", "w-[50px]"], ["Tools", "w-[41px]"], ["Technology", "w-[75px]"], ["System", "w-[52px]"], ["Help", "w-[40px]"]];

export default function App() {
  return (
    <div className="flex h-[768px] w-[1366px] flex-col overflow-hidden bg-[#e2e9f0]">
      <div className="flex h-[22px] items-center bg-white font-['Open_Sans','Noto_Sans',sans-serif] text-[12px]">
        <div className="ml-[3px] flex w-[20px] items-center"><Atom s={14} /></div>
        <span className="mt-[2px] whitespace-nowrap tracking-[-0.26px]">Mach2 - Proteus 8 Professional - PCB Layout</span>
        <div className="ml-auto mr-[19px] flex items-center gap-[35px]">
          <svg width="10" height="11" viewBox="0 0 10 11" stroke="#000"><path d="M0 5.500h10" /></svg>
          <svg width="11" height="11" viewBox="0 0 11 11" fill="none" stroke="#000"><path d="M.5 2.500h8v8h-8zM2.500 2V.5h8v8H9" /></svg>
          <svg width="11" height="11" viewBox="0 0 11 11" stroke="#000"><path d="m.5.5 10 10m0-10-10 10" /></svg>
        </div>
      </div>
      <div className="flex h-[21px] items-center border-b-2 border-[#f0f0f0] bg-white pl-[7px] pt-[2px] font-['Open_Sans','Noto_Sans',sans-serif] text-[12px] tracking-[-0.3px]">
        {menu.map(([m, w]) => <span key={m} className={w}>{m}</span>)}
      </div>
      <TopBars />
      <Tabs />
      <div className="h-[6px] shrink-0 bg-gradient-to-b from-[#c3e0f0] to-[#aed2e7]" />
      <div className="flex h-[595px] shrink-0 bg-[#dfe9f1]">
        <LeftTools />
        <SidePanel />
        <div className="w-[4px] shrink-0 border-l-2 border-[#acccdf] bg-[#edf5fa]" />
        <Board />
        <div className="flex-1 border-l border-[#eef6fb] bg-[#b9d8ea]" />
      </div>
      <StatusBar />
      <Taskbar />
    </div>
  );
}
